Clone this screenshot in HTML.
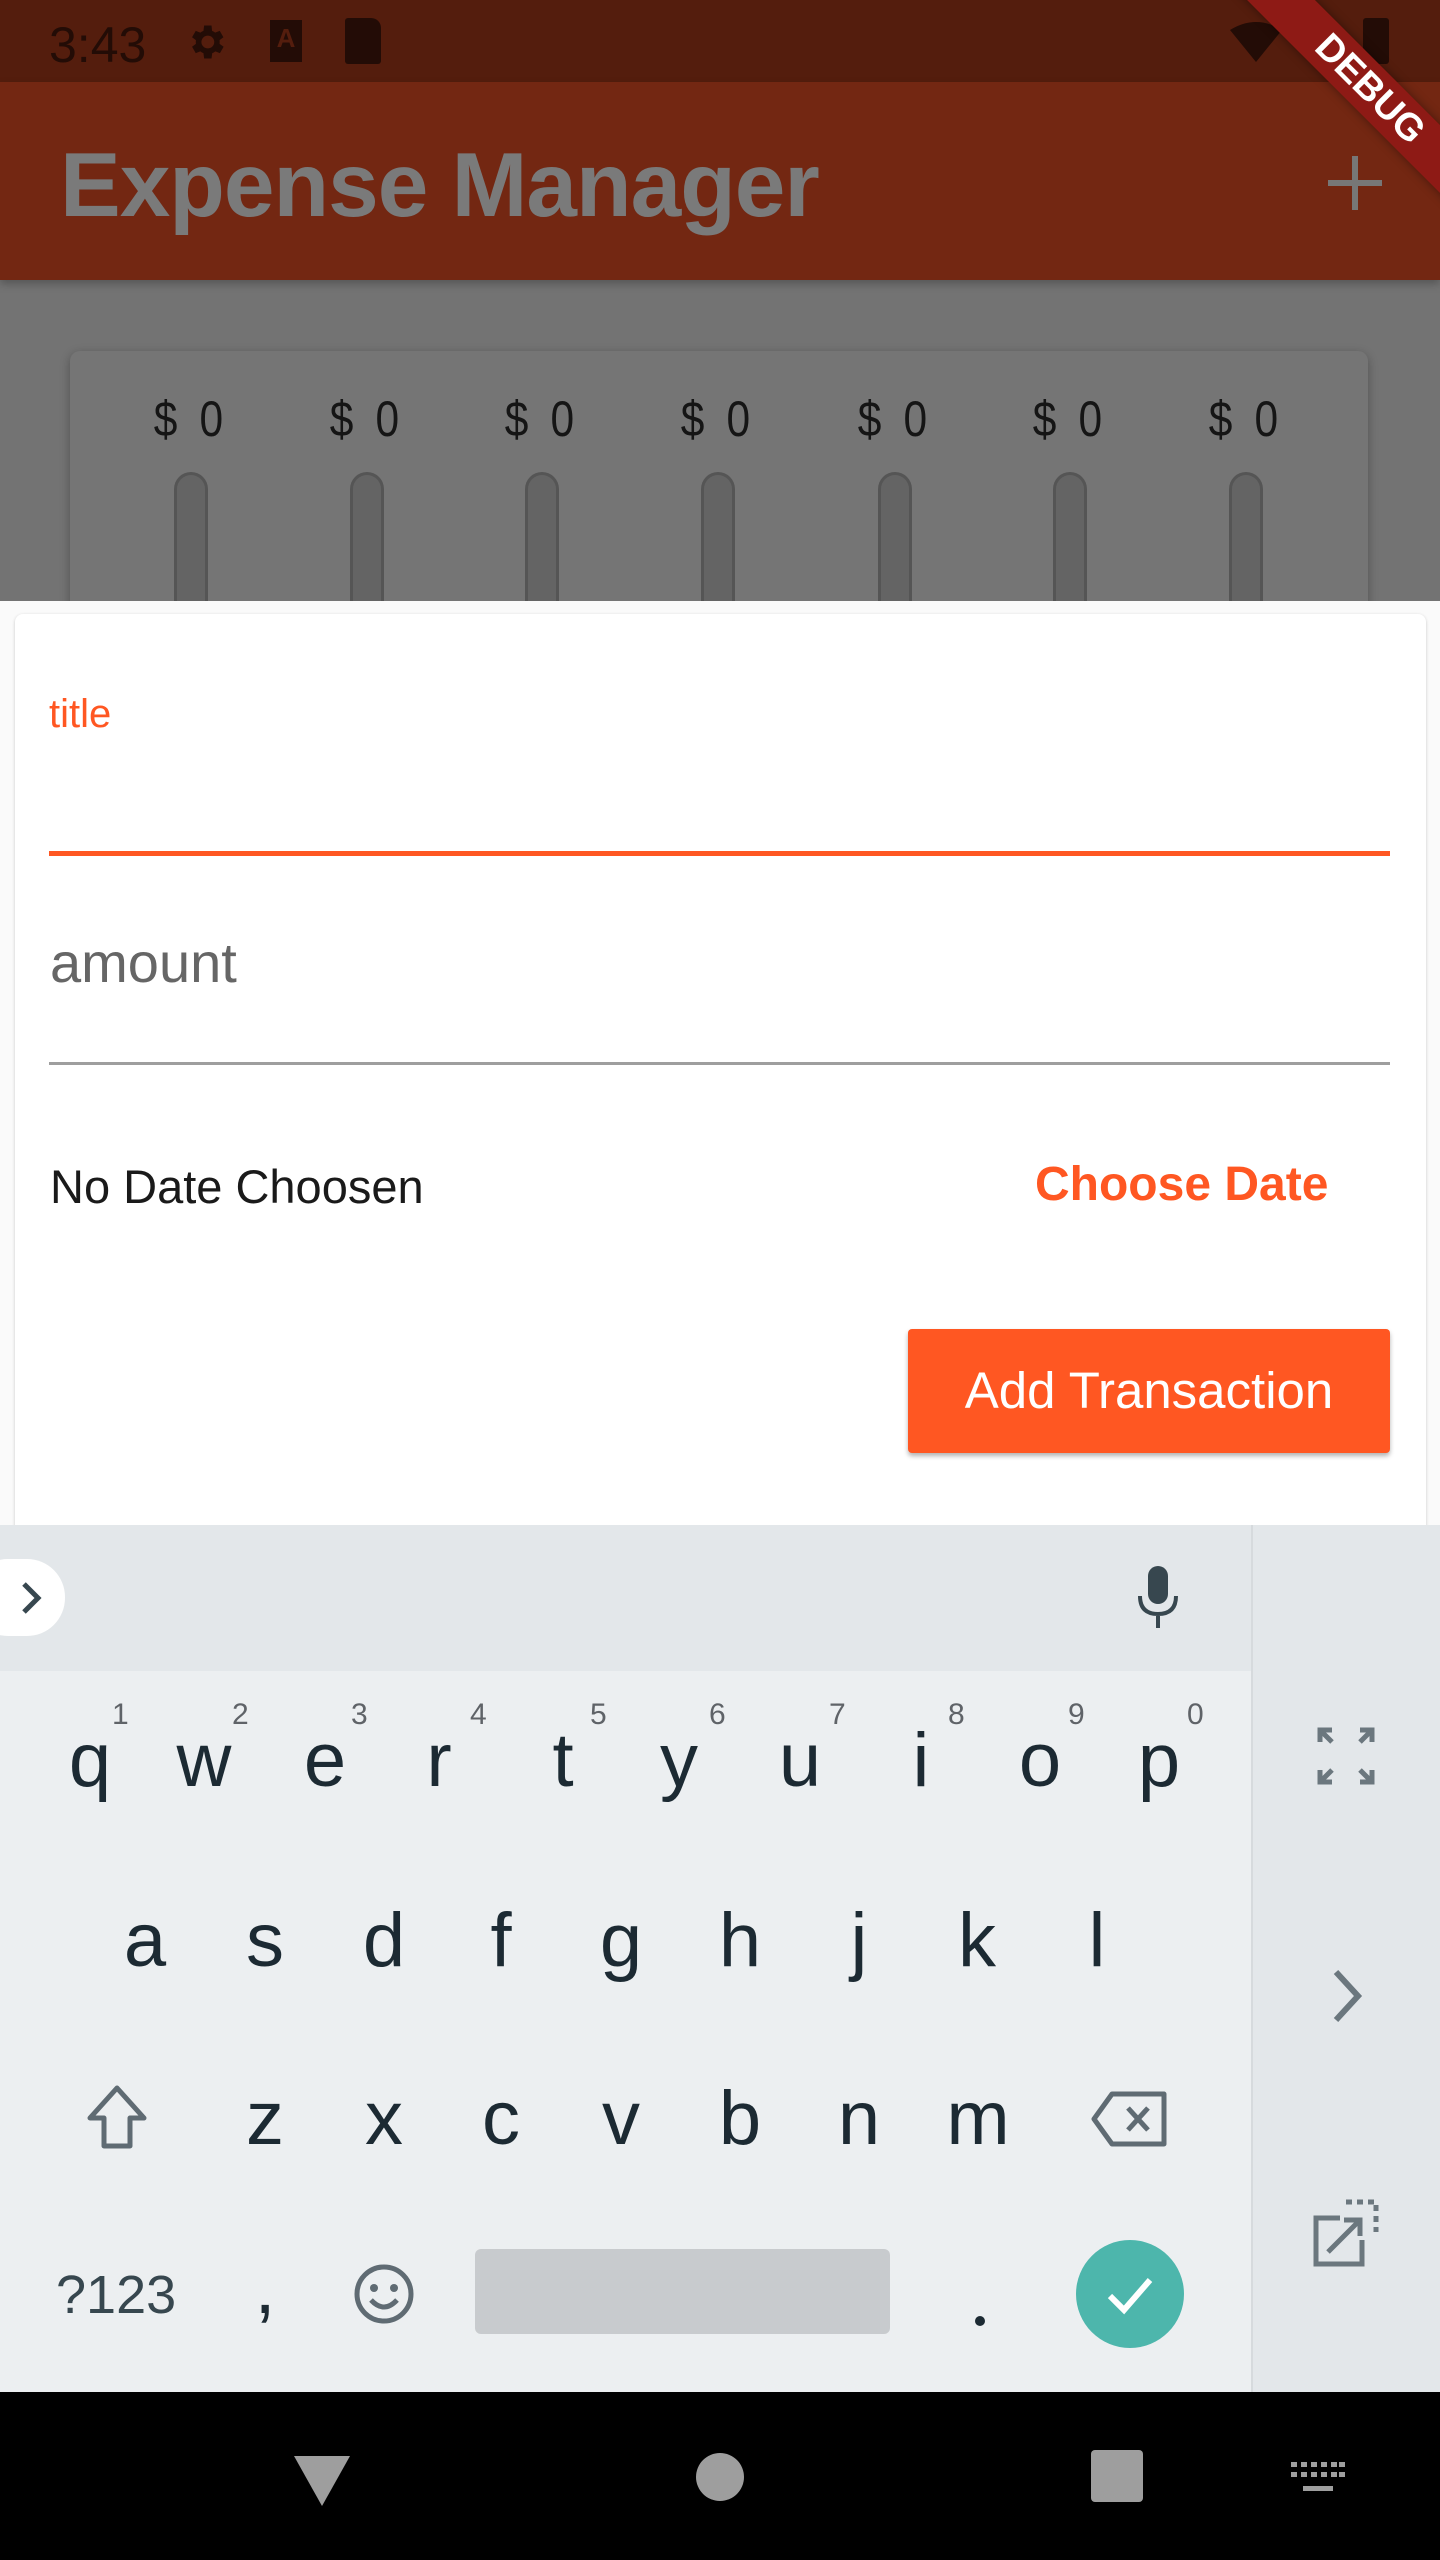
<!DOCTYPE html>
<html><head><meta charset="utf-8">
<style>
*{margin:0;padding:0;box-sizing:border-box}
body{width:1440px;height:2560px;position:relative;overflow:hidden;background:#737373;font-family:"Liberation Sans",sans-serif}
.abs{position:absolute}
.status{left:0;top:0;width:1440px;height:82px;background:#541d0d}
.appbar{left:0;top:82px;width:1440px;height:198px;background:#732712;box-shadow:0 4px 8px rgba(0,0,0,.25)}
.card{left:70px;top:351px;width:1298px;height:300px;background:#757575;border-radius:10px;box-shadow:0 3px 10px rgba(0,0,0,.3)}
.lbl{top:390px;width:120px;margin-left:-60px;text-align:center;font-size:50px;color:#151515;letter-spacing:6px;transform:scaleX(.85)}
.bar{top:472px;width:34px;margin-left:-17px;height:140px;border-radius:17px 17px 0 0;background:#646464;border:3px solid #555;border-bottom:none}
.sheet{left:0;top:601px;width:1440px;height:925px;background:#fafafa}
.inner{left:15px;top:614px;width:1411px;height:920px;background:#fff;border-radius:8px;box-shadow:0 1px 3px rgba(0,0,0,.2)}
.kb{left:0;top:1525px;width:1440px;height:867px;background:#eceff1}
.strip{left:0;top:1525px;width:1251px;height:146px;background:#e3e7ea}
.rcol{left:1251px;top:1525px;width:189px;height:867px;background:#e3e7ea;border-left:2px solid #d6dadd}
.k{font-size:76px;color:#1c2a33;width:100px;margin-left:-50px;text-align:center;line-height:1}
.n{font-size:30px;color:#5f6368;line-height:1}
.nav{left:0;top:2392px;width:1440px;height:168px;background:#000}
</style></head><body>
<div class="abs status"></div>
<div class="abs" style="left:49px;top:16px;font-size:50px;color:#230c06">3:43</div>
<svg class="abs" style="left:184px;top:20px" width="44" height="44" viewBox="0 0 24 24"><path fill="#230c06" d="M19.4 13a7.5 7.5 0 0 0 0-2l2.1-1.6-2-3.5-2.5 1a7 7 0 0 0-1.7-1L15 3h-4l-.4 2.9a7 7 0 0 0-1.7 1l-2.5-1-2 3.5L6.5 11a7.5 7.5 0 0 0 0 2l-2.1 1.6 2 3.5 2.5-1a7 7 0 0 0 1.7 1L11 21h4l.4-2.9a7 7 0 0 0 1.7-1l2.5 1 2-3.5zM13 15.5a3.5 3.5 0 1 1 0-7 3.5 3.5 0 0 1 0 7z"/></svg>
<div class="abs" style="left:270px;top:20px;width:32px;height:42px;background:#230c06;color:#541d0d;font-size:26px;font-weight:bold;text-align:center;line-height:36px">A</div>
<div class="abs" style="left:345px;top:18px;width:36px;height:46px;background:#230c06;border-radius:3px 10px 3px 3px"></div>
<svg class="abs" style="left:1228px;top:18px" width="56" height="46" viewBox="0 0 56 46"><path fill="#230c06" d="M2 12 Q28 -4 54 12 L28 44Z"/></svg>
<div class="abs" style="left:1363px;top:18px;width:26px;height:46px;background:#230c06;border-radius:3px"></div>

<div class="abs appbar"></div>
<div class="abs" style="left:60px;top:140px;font-size:91px;font-weight:bold;color:#7a7a7a;line-height:1;letter-spacing:-1px">Expense Manager</div>
<div class="abs" style="left:1328px;top:180px;width:54px;height:6px;background:#777"></div>
<div class="abs" style="left:1352px;top:156px;width:6px;height:54px;background:#777"></div>
<div class="abs" style="left:1170px;top:65px;width:400px;height:48px;background:#8e1a15;transform:rotate(45deg);color:#fff;font-weight:bold;font-size:38px;text-align:center;line-height:48px;box-shadow:0 0 10px rgba(0,0,0,.4)">DEBUG</div>

<div class="abs card"></div>
<div class="abs lbl" style="left:191px">$ 0</div><div class="abs lbl" style="left:367px">$ 0</div><div class="abs lbl" style="left:542px">$ 0</div><div class="abs lbl" style="left:718px">$ 0</div><div class="abs lbl" style="left:895px">$ 0</div><div class="abs lbl" style="left:1070px">$ 0</div><div class="abs lbl" style="left:1246px">$ 0</div>
<div class="abs bar" style="left:191px"></div><div class="abs bar" style="left:367px"></div><div class="abs bar" style="left:542px"></div><div class="abs bar" style="left:718px"></div><div class="abs bar" style="left:895px"></div><div class="abs bar" style="left:1070px"></div><div class="abs bar" style="left:1246px"></div>

<div class="abs sheet"></div>
<div class="abs inner"></div>
<div class="abs" style="left:49px;top:692px;font-size:40px;color:#ff5722">title</div>
<div class="abs" style="left:49px;top:851px;width:1341px;height:5px;background:#ff5722"></div>
<div class="abs" style="left:50px;top:930px;font-size:56px;color:#666">amount</div>
<div class="abs" style="left:49px;top:1062px;width:1341px;height:3px;background:#9e9e9e"></div>
<div class="abs" style="left:50px;top:1159px;font-size:47px;color:#1a1a1a">No Date Choosen</div>
<div class="abs" style="left:1035px;top:1157px;font-size:48px;font-weight:bold;color:#ff5722">Choose Date</div>
<div class="abs" style="left:908px;top:1329px;width:482px;height:124px;background:#ff5722;border-radius:4px;box-shadow:0 3px 5px rgba(0,0,0,.3);color:#fff;font-size:51px;text-align:center;line-height:124px">Add Transaction</div>

<div class="abs kb"></div>
<div class="abs strip"></div>
<div class="abs rcol"></div>
<div class="abs" style="left:-30px;top:1559px;width:95px;height:77px;background:#fff;border-radius:38px"></div>
<svg class="abs" style="left:16px;top:1578px" width="30" height="40" viewBox="0 0 30 40"><path d="M8 6 L22 20 L8 34" fill="none" stroke="#37474f" stroke-width="5"/></svg>
<svg class="abs" style="left:1134px;top:1566px" width="48" height="64" viewBox="0 0 48 64"><rect x="14" y="0" width="20" height="38" rx="10" fill="#37474f"/><path d="M6 30 Q6 48 24 48 Q42 48 42 30 M24 48 V62" fill="none" stroke="#37474f" stroke-width="4"/></svg>

<!-- row1 -->
<div class="abs k" style="left:90px;top:1723px">q</div><div class="abs k" style="left:204px;top:1723px">w</div><div class="abs k" style="left:325px;top:1723px">e</div><div class="abs k" style="left:439px;top:1723px">r</div><div class="abs k" style="left:563px;top:1723px">t</div><div class="abs k" style="left:679px;top:1723px">y</div><div class="abs k" style="left:800px;top:1723px">u</div><div class="abs k" style="left:921px;top:1723px">i</div><div class="abs k" style="left:1040px;top:1723px">o</div><div class="abs k" style="left:1159px;top:1723px">p</div>
<div class="abs n" style="left:112px;top:1700px">1</div><div class="abs n" style="left:232px;top:1700px">2</div><div class="abs n" style="left:351px;top:1700px">3</div><div class="abs n" style="left:470px;top:1700px">4</div><div class="abs n" style="left:590px;top:1700px">5</div><div class="abs n" style="left:709px;top:1700px">6</div><div class="abs n" style="left:829px;top:1700px">7</div><div class="abs n" style="left:948px;top:1700px">8</div><div class="abs n" style="left:1068px;top:1700px">9</div><div class="abs n" style="left:1187px;top:1700px">0</div>
<!-- row2 -->
<div class="abs k" style="left:145px;top:1903px">a</div><div class="abs k" style="left:265px;top:1903px">s</div><div class="abs k" style="left:384px;top:1903px">d</div><div class="abs k" style="left:501px;top:1903px">f</div><div class="abs k" style="left:621px;top:1903px">g</div><div class="abs k" style="left:740px;top:1903px">h</div><div class="abs k" style="left:859px;top:1903px">j</div><div class="abs k" style="left:977px;top:1903px">k</div><div class="abs k" style="left:1097px;top:1903px">l</div>
<!-- row3 -->
<svg class="abs" style="left:82px;top:2082px" width="70" height="70" viewBox="0 0 70 70"><path d="M35 6 L62 36 H48 V64 H22 V36 H8 Z" fill="none" stroke="#5f6b73" stroke-width="5" stroke-linejoin="round"/></svg>
<div class="abs k" style="left:265px;top:2081px">z</div><div class="abs k" style="left:384px;top:2081px">x</div><div class="abs k" style="left:501px;top:2081px">c</div><div class="abs k" style="left:621px;top:2081px">v</div><div class="abs k" style="left:740px;top:2081px">b</div><div class="abs k" style="left:859px;top:2081px">n</div><div class="abs k" style="left:978px;top:2081px">m</div>
<svg class="abs" style="left:1090px;top:2090px" width="80" height="58" viewBox="0 0 80 58"><path d="M22 4 H74 V54 H22 L4 29 Z" fill="none" stroke="#5f6b73" stroke-width="5" stroke-linejoin="round"/><path d="M38 18 L58 40 M58 18 L38 40" stroke="#5f6b73" stroke-width="5"/></svg>
<!-- row4 -->
<div class="abs" style="left:56px;top:2264px;font-size:54px;color:#37474f">?123</div>
<div class="abs k" style="left:265px;top:2250px">,</div>
<svg class="abs" style="left:352px;top:2262px" width="64" height="64" viewBox="0 0 64 64"><circle cx="32" cy="32" r="27" fill="none" stroke="#5f6b73" stroke-width="5"/><circle cx="22" cy="26" r="4" fill="#5f6b73"/><circle cx="42" cy="26" r="4" fill="#5f6b73"/><path d="M19 38 Q32 52 45 38" fill="none" stroke="#5f6b73" stroke-width="5"/></svg>
<div class="abs" style="left:475px;top:2249px;width:415px;height:85px;background:#c8cbce;border-radius:6px"></div>
<div class="abs" style="left:975px;top:2316px;width:10px;height:10px;border-radius:5px;background:#1c2a33"></div>
<div class="abs" style="left:1076px;top:2240px;width:108px;height:108px;border-radius:54px;background:#4db6ac"></div>
<svg class="abs" style="left:1100px;top:2264px" width="60" height="60" viewBox="0 0 60 60"><path d="M10 32 L24 46 L50 16" fill="none" stroke="#fff" stroke-width="6"/></svg>
<!-- right column -->
<svg class="abs" style="left:1316px;top:1726px" width="60" height="60" viewBox="0 0 60 60" fill="none" stroke="#6b777e" stroke-width="5"><path d="M4 16 V4 H16 M4 4 L16 16 M56 16 V4 H44 M56 4 L44 16 M4 44 V56 H16 M4 56 L16 44 M56 44 V56 H44 M56 56 L44 44"/></svg>
<svg class="abs" style="left:1326px;top:1966px" width="40" height="60" viewBox="0 0 40 60"><path d="M10 6 L32 30 L10 54" fill="none" stroke="#6b777e" stroke-width="6"/></svg>
<svg class="abs" style="left:1310px;top:2198px" width="72" height="72" viewBox="0 0 72 72" fill="none" stroke="#6b777e" stroke-width="5"><path d="M30 20 H6 V66 H52 V42"/><path d="M18 54 L48 24 M34 22 H50 V38"/><path d="M36 4 H66 V34" stroke-dasharray="6 5"/></svg>

<div class="abs nav"></div>
<svg class="abs" style="left:292px;top:2452px" width="60" height="56" viewBox="0 0 60 56"><path d="M2 4 H58 L30 54 Z" fill="#9e9e9e"/></svg>
<div class="abs" style="left:696px;top:2453px;width:48px;height:48px;border-radius:24px;background:#9e9e9e"></div>
<div class="abs" style="left:1091px;top:2450px;width:52px;height:52px;border-radius:4px;background:#9e9e9e"></div>
<svg class="abs" style="left:1291px;top:2462px" width="54" height="34" viewBox="0 0 54 34" fill="#9e9e9e"><rect x="0" y="0" width="6" height="5"/><rect x="10" y="0" width="6" height="5"/><rect x="20" y="0" width="6" height="5"/><rect x="30" y="0" width="6" height="5"/><rect x="40" y="0" width="6" height="5"/><rect x="48" y="0" width="6" height="5"/><rect x="0" y="10" width="6" height="5"/><rect x="10" y="10" width="6" height="5"/><rect x="20" y="10" width="6" height="5"/><rect x="30" y="10" width="6" height="5"/><rect x="40" y="10" width="6" height="5"/><rect x="48" y="10" width="6" height="5"/><rect x="12" y="24" width="30" height="5"/></svg>
</body></html>
